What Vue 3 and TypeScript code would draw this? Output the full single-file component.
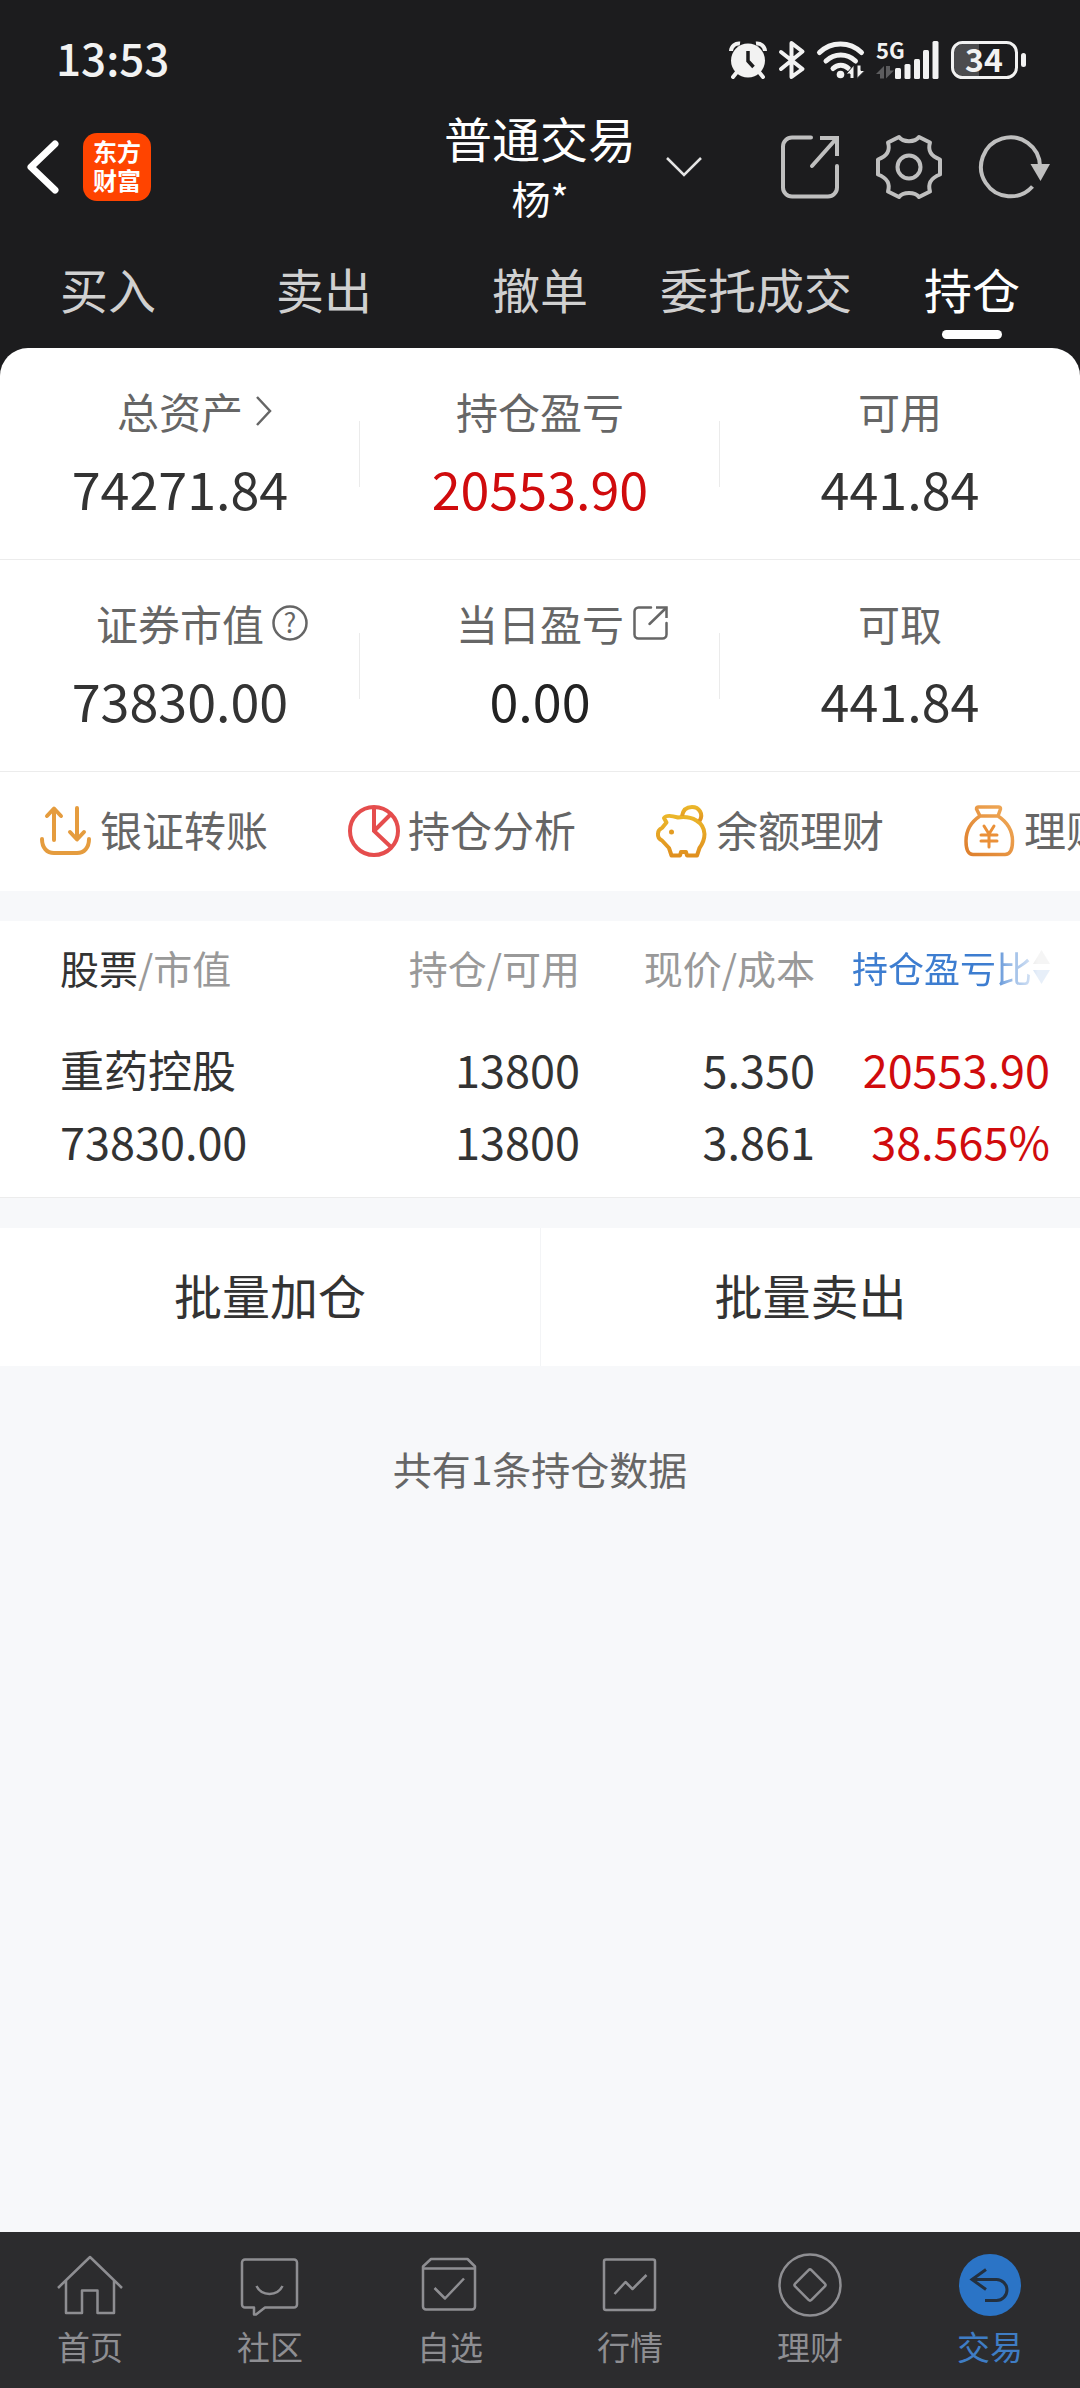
<script setup lang="ts">
import { ref } from 'vue'

interface Metric {
  label: string
  value: string
  icon?: 'chevron' | 'help' | 'external'
  tone?: 'red' | 'dark'
}

type ActionIcon = 'transfer' | 'pie' | 'pig' | 'bag'
type NavIcon = 'home' | 'chat' | 'pick' | 'chart' | 'wealth' | 'trade'

const tabs: string[] = ['买入', '卖出', '撤单', '委托成交', '持仓']
const activeTab = ref('持仓')

const metricRows: Metric[][] = [
  [
    { label: '总资产', value: '74271.84', icon: 'chevron' },
    { label: '持仓盈亏', value: '20553.90', tone: 'red' },
    { label: '可用', value: '441.84' },
  ],
  [
    { label: '证券市值', value: '73830.00', icon: 'help' },
    { label: '当日盈亏', value: '0.00', icon: 'external', tone: 'dark' },
    { label: '可取', value: '441.84' },
  ],
]

const actions: { label: string; icon: ActionIcon }[] = [
  { label: '银证转账', icon: 'transfer' },
  { label: '持仓分析', icon: 'pie' },
  { label: '余额理财', icon: 'pig' },
  { label: '理财', icon: 'bag' },
]

const holdings = [
  {
    name: '重药控股',
    marketValue: '73830.00',
    held: '13800',
    available: '13800',
    price: '5.350',
    cost: '3.861',
    profit: '20553.90',
    ratio: '38.565%',
  },
]

const navItems: { label: string; icon: NavIcon }[] = [
  { label: '首页', icon: 'home' },
  { label: '社区', icon: 'chat' },
  { label: '自选', icon: 'pick' },
  { label: '行情', icon: 'chart' },
  { label: '理财', icon: 'wealth' },
  { label: '交易', icon: 'trade' },
]
const activeNav = ref<NavIcon>('trade')
</script>

<template>
  <div class="app">
    <div class="top">
      <div class="status">
        <time class="clock">13:53</time>
        <div class="status-icons">
          <svg width="38" height="38" viewBox="0 0 38 38" aria-hidden="true">
            <path d="M2 10A8 8 0 0 1 11 2.500M36 10A8 8 0 0 0 27 2.500" fill="none" stroke="#f2f2f2" stroke-width="4" />
            <path d="M8 31l-4 5M30 31l4 5" stroke="#f2f2f2" stroke-width="4" stroke-linecap="round" />
            <circle cx="19" cy="19.500" r="17" fill="#f2f2f2" />
            <path d="M19 10v10l5.500 6" fill="none" stroke="#1c1c1e" stroke-width="3.500" />
          </svg>
          <svg width="26" height="38" viewBox="0 0 26 38" aria-hidden="true">
            <path d="M2 11l21.500 17L12.500 36V2l11 8.500L2 28" fill="none" stroke="#f2f2f2" stroke-width="4" stroke-linejoin="round" stroke-linecap="round" />
          </svg>
          <svg width="47" height="38" viewBox="0 0 47 38" aria-hidden="true">
            <path d="M2.500 11.500C14 0 33 0 44.500 11.500M9 20c8.500-8 21-8 29.500 0M16 27.500c4.500-4.500 11-4.500 15.500 0" fill="none" stroke="#f2f2f2" stroke-width="5" stroke-linecap="round" />
            <circle cx="23.500" cy="33.500" r="3.800" fill="#f2f2f2" />
            <path d="M29 33l8-9v13.500h-4V33zM40 24v13.500l8-8h-4V24z" fill="#f2f2f2" stroke="#1c1c1e" stroke-width="1" />
          </svg>
          <svg width="63" height="38" viewBox="0 0 63 38" aria-label="5G">
            <text class="net" x="0" y="18">5G</text>
            <path d="M0 33l8-8v12.500H4V33zM10 25v12.500l8-8h-4V25z" fill="#5c5c5e" />
            <g fill="#f2f2f2">
              <rect x="19" y="27" width="6" height="11" rx="1.500" />
              <rect x="28.500" y="23" width="6" height="15" rx="1.500" />
              <rect x="38" y="18" width="6" height="20" rx="1.500" />
              <rect x="47" y="9" width="6" height="29" rx="1.500" />
              <rect x="56.500" y="0" width="6" height="38" rx="1.500" />
            </g>
          </svg>
          <svg width="75" height="38" viewBox="0 0 75 38" aria-label="34%">
            <path d="M12 3h16v32H12a9 9 0 0 1-9-9V12a9 9 0 0 1 9-9z" fill="#4c4c4e" />
            <rect x="1.500" y="1.500" width="64" height="35" rx="10" fill="none" stroke="#f2f2f2" stroke-width="3" />
            <rect x="70" y="12" width="5" height="14" rx="2.500" fill="#f2f2f2" />
            <text class="level" x="33" y="31" text-anchor="middle">34</text>
          </svg>
        </div>
      </div>

      <header class="header">
        <div class="header-left">
          <button class="plain" type="button" aria-label="返回">
            <svg width="32" height="54" viewBox="0 0 32 54">
              <path d="M28 4L4 27l24 23" fill="none" stroke="#fff" stroke-width="7" stroke-linecap="round" stroke-linejoin="round" />
            </svg>
          </button>
          <span class="logo">东方<br />财富</span>
        </div>
        <h1 class="title">
          普通交易
          <small>杨*</small>
        </h1>
        <div class="header-right">
          <button class="plain switcher" type="button" aria-label="切换账户">
            <svg width="36" height="20" viewBox="0 0 36 20">
              <path d="M1 1l17 17L35 1" fill="none" stroke="#e4e4e4" stroke-width="2.500" />
            </svg>
          </button>
          <button class="plain" type="button" aria-label="分享">
            <svg width="58" height="64" viewBox="0 0 58 64" fill="none" stroke="#bfbfbf" stroke-width="4">
              <path d="M30 2.500H11a9 9 0 0 0-9 9v41a9 9 0 0 0 9 9h36a9 9 0 0 0 9-9V31M31 31L55 4" stroke-linecap="round" />
              <path d="M39 3h17v18" />
            </svg>
          </button>
          <button class="plain" type="button" aria-label="设置">
            <svg width="66" height="64" viewBox="-33 -32 66 64" fill="none" stroke="#bfbfbf" stroke-width="4" stroke-linejoin="round">
              <path d="M-10-30C-6-24.500 6-24.500 10-30L21-24.500C18.500-16 22-11 31-7.500V7.500C22 11 18.500 16 21 24.500L10 30C6 24.500-6 24.500-10 30L-21 24.500C-18.500 16-22 11-31 7.500V-7.500C-22-11-18.500-16-21-24.500Z" />
              <circle r="11.500" />
            </svg>
          </button>
          <button class="plain" type="button" aria-label="刷新">
            <svg width="72" height="64" viewBox="0 0 72 64">
              <path d="M61 31A29.500 29.500 0 1 0 53.500 51.500" fill="none" stroke="#bfbfbf" stroke-width="4" />
              <path d="M51.500 29H71L61.500 46z" fill="#bfbfbf" />
            </svg>
          </button>
        </div>
      </header>

      <nav class="tabs">
        <button
          v-for="tab in tabs"
          :key="tab"
          type="button"
          class="tab"
          :class="{ active: tab === activeTab }"
          @click="activeTab = tab"
        >
          {{ tab }}
        </button>
      </nav>
    </div>

    <main>
      <section class="summary-wrap">
        <div class="summary">
          <div v-for="(row, r) in metricRows" :key="r" class="metric-row">
            <div v-for="metric in row" :key="metric.label" class="metric">
              <div class="metric-label">
                <span class="metric-name">{{ metric.label }}</span>
                <svg v-if="metric.icon === 'chevron'" width="24" height="30" viewBox="0 0 24 30">
                  <path d="M6 1l13 14L6 29" fill="none" stroke="#666" stroke-width="2.500" />
                </svg>
                <svg v-else-if="metric.icon === 'help'" width="36" height="36" viewBox="0 0 36 36">
                  <circle cx="18" cy="18" r="16.500" fill="none" stroke="#666" stroke-width="2.500" />
                  <text class="help" x="18" y="28" text-anchor="middle">?</text>
                </svg>
                <svg v-else-if="metric.icon === 'external'" width="36" height="36" viewBox="0 0 36 36" fill="none" stroke="#666" stroke-width="2.500">
                  <path d="M19 2.500H6.500a4 4 0 0 0-4 4v23a4 4 0 0 0 4 4h24a4 4 0 0 0 4-4V18M17.500 19L34 3" stroke-linecap="round" />
                  <path d="M24 2.500h10.500V13" />
                </svg>
              </div>
              <div class="metric-value" :class="metric.tone">{{ metric.value }}</div>
            </div>
          </div>

          <div class="actions">
            <button v-for="action in actions" :key="action.label" type="button" class="action">
              <svg v-if="action.icon === 'transfer'" width="52" height="52" viewBox="0 0 52 52" fill="none" stroke="#e59c3e" stroke-width="4" stroke-linecap="round" stroke-linejoin="round">
                <path d="M2 34c0 9 5 14 12 14h23c7 0 12-5 12-14M14 35V4M7 11l7-7.500 7 7.500M37 3v31M30 27l7 7.500 7-7.500" />
              </svg>
              <svg v-else-if="action.icon === 'pie'" width="52" height="52" viewBox="0 0 52 52" fill="none" stroke="#e54d4d" stroke-width="4">
                <circle cx="26" cy="26" r="24" />
                <path d="M26 2v24l17 16M26 26l16-16" />
              </svg>
              <svg v-else-if="action.icon === 'pig'" width="52" height="52" viewBox="0 0 52 52" fill="none" stroke="url(#pigFill)" stroke-width="4" stroke-linejoin="round">
                <defs>
                  <linearGradient id="pigFill" x1="0" y1="0" x2="0" y2="1">
                    <stop offset="0" stop-color="#ebb62a" />
                    <stop offset="1" stop-color="#e0901f" />
                  </linearGradient>
                </defs>
                <path d="M8 13c2-3 9-2 14-.500C36 10.500 48 17 48.500 29c0 6-2.500 10.500-5 14l-2.500 7.500H31L30 47h-5l-1 3.500h-8.500L13 43l-7-7.500c-3-1.500-4.500-3-4-7 0-3 1.500-4.500 4-5.500l4.500-5.500z" />
                <path d="M26 11c1-6 5-9 10-9 7 0 12 7 7.500 14" />
                <circle cx="15.500" cy="27" r="2.500" fill="#e39c22" stroke="none" />
              </svg>
              <svg v-else width="52" height="52" viewBox="0 0 52 52" fill="none" stroke="url(#bagFill)" stroke-width="3.500" stroke-linejoin="round" stroke-linecap="round">
                <defs>
                  <linearGradient id="bagFill" x1="0" y1="1" x2="1" y2="0">
                    <stop offset="0" stop-color="#de7f2c" />
                    <stop offset="1" stop-color="#f0ab5a" />
                  </linearGradient>
                </defs>
                <path d="M16 11l-3.500-7c0-1.500.500-2 2-2h20c1.500 0 2 .500 2 2L34 11zM16 11C7 17 2 26 2 36c0 8 2 13.500 7 13.500h32c5 0 7.500-5.500 7.500-13.500C48.500 26 43 17 34 11" />
                <path d="M20 21l5 8 5-8M25 29v13M17 30h16M17 36h16" stroke="#ea9038" stroke-width="3" />
              </svg>
              <span>{{ action.label }}</span>
            </button>
          </div>
        </div>
      </section>

      <section class="holdings">
        <table class="table">
          <thead>
            <tr>
              <th scope="col"><b>股票</b>/市值</th>
              <th scope="col">持仓/可用</th>
              <th scope="col">现价/成本</th>
              <th scope="col">
                <button type="button" class="sort">
                  <span>持仓盈亏比</span>
                  <svg width="17" height="36" viewBox="0 0 17 36">
                    <path d="M8.500 1L17 15H0z" fill="#aaa" />
                    <path d="M8.500 35L17 21H0z" fill="#3d7fd0" />
                  </svg>
                </button>
              </th>
            </tr>
          </thead>
          <tbody>
            <tr v-for="item in holdings" :key="item.name">
              <td><span class="stock">{{ item.name }}</span><span>{{ item.marketValue }}</span></td>
              <td><span>{{ item.held }}</span><span>{{ item.available }}</span></td>
              <td><span>{{ item.price }}</span><span>{{ item.cost }}</span></td>
              <td class="red"><span>{{ item.profit }}</span><span>{{ item.ratio }}</span></td>
            </tr>
          </tbody>
        </table>
      </section>

      <section class="batch">
        <button type="button">批量加仓</button>
        <button type="button">批量卖出</button>
      </section>

      <p class="count">共有1条持仓数据</p>
    </main>

    <nav class="nav">
      <a
        v-for="item in navItems"
        :key="item.icon"
        href="#"
        class="nav-item"
        :class="{ active: item.icon === activeNav }"
        @click.prevent="activeNav = item.icon"
      >
        <svg width="64" height="64" viewBox="0 0 64 64" fill="none" stroke="currentColor" stroke-width="2.500" stroke-linejoin="round">
          <path v-if="item.icon === 'home'" d="M0 35L32 4l32 31M8 28v32h16V37.500h15.500V60H56V28" />
          <template v-else-if="item.icon === 'chat'">
            <path d="M27 54.500h29a3 3 0 0 0 3-3v-42a3 3 0 0 0-3-3H7a3 3 0 0 0-3 3v42a3 3 0 0 0 3 3h9v7h2z" />
            <path d="M18.500 33c5 10.500 21 10.500 26 0" />
          </template>
          <path v-else-if="item.icon === 'pick'" d="M5 15.500h52v38a3 3 0 0 1-3 3H8a3 3 0 0 1-3-3v-40L13 6h36.500L57 13.500v2M16.500 35L27 45.500l19-20" />
          <template v-else-if="item.icon === 'chart'">
            <rect x="6" y="6.500" width="51" height="50.500" rx="2" />
            <path d="M16.500 41l11-12 7 7L48.500 22" />
          </template>
          <template v-else-if="item.icon === 'wealth'">
            <circle cx="32" cy="32" r="30.500" />
            <rect x="20.500" y="20.500" width="23" height="23" rx="2" transform="rotate(45 32 32)" />
          </template>
          <template v-else>
            <circle cx="32" cy="32" r="31" fill="#2b74c6" stroke="none" />
            <path d="M28 16.500L14 26.500l14 10M14 26.500h24.500a10.500 10.500 0 0 1 0 21H27" stroke="#23303f" stroke-width="3" stroke-linejoin="miter" />
          </template>
        </svg>
        <span>{{ item.label }}</span>
      </a>
    </nav>
  </div>
</template>

<style>
body {
  margin: 0;
  background: #f7f8fa;
}
</style>

<style scoped>
.app {
  display: flex;
  flex-direction: column;
  min-height: 100vh;
  background: #f7f8fa;
  color: #333;
  font-family: "Noto Sans CJK SC", "Noto Sans", sans-serif;
}

button {
  margin: 0;
  padding: 0;
  border: 0;
  background: none;
  color: inherit;
  font: inherit;
  cursor: pointer;
}

svg {
  display: block;
  flex: none;
  overflow: visible;
}

.top {
  background: #1c1c1e;
  color: #fff;
}

.status {
  display: flex;
  align-items: center;
  justify-content: space-between;
  box-sizing: border-box;
  height: 106px;
  padding: 14px 54px 0 56px;
}

.clock {
  color: #f2f2f2;
  font-size: 44px;
  font-weight: 500;
  line-height: 60px;
  padding-bottom: 6px;
}

.status-icons {
  display: flex;
  gap: 12px;
}

.net {
  fill: #f2f2f2;
  font-size: 22px;
  font-weight: 700;
}

.level {
  fill: #f2f2f2;
  font-size: 32px;
  font-weight: 700;
}

.header {
  display: grid;
  grid-template-columns: 1fr auto 1fr;
  align-items: center;
  height: 122px;
}

.header-left {
  display: flex;
  align-items: center;
  gap: 24px;
  padding-left: 27px;
}

.plain {
  display: flex;
}

.logo {
  box-sizing: border-box;
  width: 68px;
  height: 68px;
  padding-top: 3px;
  border-radius: 14px;
  background: #ff4400;
  color: #fff;
  font-size: 24px;
  font-weight: 700;
  line-height: 29px;
  text-align: center;
}

.title {
  margin: 0;
  font-size: 48px;
  font-weight: 400;
  line-height: 60px;
  text-align: center;
}

.title small {
  display: block;
  font-size: 39px;
}

.header-right {
  display: flex;
  align-items: center;
  gap: 37px;
  padding: 0 29px 0 30px;
}

.switcher {
  margin-right: auto;
}

.tabs {
  display: grid;
  grid-template-columns: repeat(5, 1fr);
  padding: 30px 0 9px;
}

.tab {
  display: flex;
  flex-direction: column;
  align-items: center;
  gap: 12px;
  color: #d0d0d0;
  font-size: 48px;
  line-height: 60px;
}

.tab::after {
  width: 60px;
  height: 9px;
  border-radius: 5px;
  content: "";
}

.tab.active {
  color: #fff;
}

.tab.active::after {
  background: #fff;
}

.summary-wrap {
  background: #1c1c1e;
}

.summary {
  border-radius: 28px 28px 0 0;
  background: #fff;
  overflow: hidden;
}

.metric-row {
  display: grid;
  grid-template-columns: repeat(3, 1fr);
  padding: 33px 0 39px;
  border-bottom: 1px solid #ececec;
}

.metric {
  background: linear-gradient(#ebebeb, #ebebeb) right 55% / 1px 66px no-repeat;
}

.metric:last-child {
  background: none;
}

.metric-label {
  display: grid;
  grid-template-columns: 1fr auto 1fr;
  align-items: center;
  column-gap: 8px;
  margin-bottom: 15px;
  color: #666;
  font-size: 42px;
  line-height: 60px;
}

.metric-name {
  grid-column: 2;
}

.help {
  fill: #666;
  font-size: 27px;
}

.metric-value {
  font-size: 52px;
  line-height: 64px;
  text-align: center;
}

.metric-value.dark {
  color: #222;
}

.red,
.metric-value.red {
  color: #d00b0d;
}

.actions {
  display: flex;
  align-items: center;
  gap: 80px;
  box-sizing: border-box;
  height: 119px;
  padding: 0 0 2px 40px;
  overflow: hidden;
}

.action {
  display: flex;
  flex: none;
  align-items: center;
  gap: 8px;
  color: #666;
  font-size: 42px;
  line-height: 60px;
  white-space: nowrap;
}

.action span {
  padding-bottom: 4px;
}

.holdings {
  margin-top: 30px;
  padding: 0 30px 20px 60px;
  border-bottom: 1px solid #ececec;
  background: #fff;
}

.table {
  width: 100%;
  table-layout: fixed;
  border-collapse: collapse;
}

.table th,
.table td {
  padding: 0;
  text-align: right;
  white-space: nowrap;
}

.table th {
  width: 235px;
  height: 92px;
  color: #999;
  font-size: 39px;
  font-weight: 400;
}

.table th:first-child {
  width: auto;
}

.table th b {
  color: #333;
  font-weight: 400;
}

.table th:first-child,
.table td:first-child {
  text-align: left;
}

.table td {
  padding-top: 20px;
  font-size: 45px;
  line-height: 72px;
}

.table td span {
  display: block;
}

.table td .stock {
  font-size: 44px;
}

.sort {
  display: flex;
  align-items: center;
  gap: 1px;
  margin-left: auto;
  color: #3d7dd0;
  font-size: 36px;
  line-height: 60px;
  mask-image: linear-gradient(to right, #000 70%, rgba(0, 0, 0, 0.6) 78%, rgba(0, 0, 0, 0.12) 94%);
}

.batch {
  display: grid;
  grid-template-columns: 1fr 1fr;
  margin-top: 30px;
  background: #fff;
}

.batch button {
  padding: 36px 0 42px;
  font-size: 48px;
  line-height: 60px;
}

.batch button + button {
  border-left: 1px solid #f3f4f6;
}

.count {
  margin: 72px 0;
  color: #666;
  font-size: 39px;
  line-height: 60px;
  text-align: center;
}

.nav {
  display: grid;
  grid-template-columns: repeat(6, 1fr);
  margin-top: auto;
  background: #2c2c2e;
}

.nav-item {
  display: flex;
  flex-direction: column;
  align-items: center;
  gap: 9px;
  padding: 21px 0 22px;
  color: #8e8e92;
  font-size: 33px;
  line-height: 40px;
  text-decoration: none;
}

.nav-item.active {
  color: #3f7dc4;
}
</style>
